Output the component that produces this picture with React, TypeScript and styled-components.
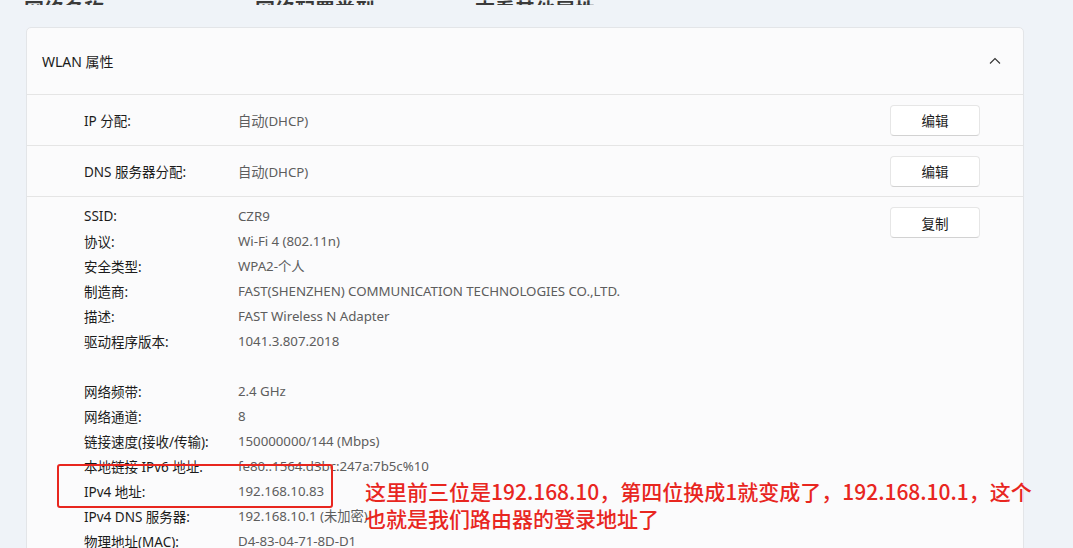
import React from 'react';
import styled, {createGlobalStyle} from 'styled-components';

const GlobalStyle = createGlobalStyle`
  html, body {
    margin: 0;
    padding: 0;
    background: #eff3f8;
    overflow: hidden;
  }
  body {
    font-family: "Noto Sans", "Noto Sans CJK SC", sans-serif;
    -webkit-font-smoothing: antialiased;
  }
`;

const Page = styled.div`
  position: relative;
  width: 1073px;
  height: 548px;
  overflow: hidden;
`;

const TopStrip = styled.div`
  height: 5px;
  overflow: hidden;
  display: flex;
  align-items: flex-end;
  padding-left: 24px;
`;
const TopTitle = styled.span<{ $w: number }>`
  width: ${p => p.$w}px;
  flex: none;
  font-size: 20px;
  line-height: 20px;
  font-weight: 600;
  color: #3a3a3a;
  white-space: nowrap;
  transform: translateY(16px);
`;

const Card = styled.div`
  margin: 22px 0 0 26px;
  width: 996px;
  background: #fbfbfc;
  border: 1px solid #e3e5e8;
  border-radius: 5px;
`;
const Header = styled.div`
  height: 66px;
  display: flex;
  align-items: center;
  justify-content: space-between;
  padding: 0 22px 0 15px;
  font-size: 14px;
  color: #1b1b1b;
  border-bottom: 1px solid #e5e5e5;
`;
const Row = styled.div`
  height: 50px;
  display: flex;
  align-items: center;
  padding: 0 43px 0 57px;
  border-bottom: 1px solid #e5e5e5;
`;
const Label = styled.div`
  width: 154px;
  flex: none;
  font-size: 13.5px;
  color: #1b1b1b;
  white-space: nowrap;
`;
const Value = styled.div`
  flex: 1;
  font-size: 13.3px;
  letter-spacing: -0.05px;
  color: #5d5d5d;
  white-space: nowrap;
`;
const Button = styled.div`
  width: 88px;
  height: 29px;
  flex: none;
  display: flex;
  align-items: center;
  justify-content: center;
  background: #ffffff;
  border: 1px solid #e6e6e6;
  border-bottom-color: #d2d2d2;
  border-radius: 4px;
  font-size: 13.5px;
  color: #1b1b1b;
`;
const Details = styled.div`
  display: flex;
  align-items: flex-start;
  padding: 6px 43px 20px 57px;
`;
const List = styled.div`
  flex: 1;
  display: flex;
  flex-direction: column;
`;
const DetailRow = styled.div`
  height: 25px;
  display: flex;
  align-items: center;
`;
const Gap = styled.div`
  height: 25px;
`;
const CopyButton = styled(Button)`
  margin-top: 4px;
`;

const RedBox = styled.div`
  position: absolute;
  left: 57px;
  top: 464px;
  width: 272px;
  height: 40px;
  border: 2px solid #e8261f;
  border-radius: 3px;
`;
const Note = styled.div`
  position: absolute;
  left: 365px;
  top: 478px;
  font-size: 21px;
  line-height: 27px;
  font-weight: 500;
  color: #e8261f;
  white-space: nowrap;
  font-family: "Noto Sans CJK SC", sans-serif;
`;

const Chevron = () => (
    <svg width="12" height="8" viewBox="0 0 12 8" fill="none">
        <path d="M1 6.5L6 1.5L11 6.5" stroke="#333" strokeWidth="1.1"/>
    </svg>
);

const details: (string[] | null)[] = [
    ['SSID:', 'CZR9'],
    ['协议:', 'Wi-Fi 4 (802.11n)'],
    ['安全类型:', 'WPA2-个人'],
    ['制造商:', 'FAST(SHENZHEN) COMMUNICATION TECHNOLOGIES CO.,LTD.'],
    ['描述:', 'FAST Wireless N Adapter'],
    ['驱动程序版本:', '1041.3.807.2018'],
    null,
    ['网络频带:', '2.4 GHz'],
    ['网络通道:', '8'],
    ['链接速度(接收/传输):', '150000000/144 (Mbps)'],
    ['本地链接 IPv6 地址:', 'fe80::1564:d3bc:247a:7b5c%10'],
    ['IPv4 地址:', '192.168.10.83'],
    ['IPv4 DNS 服务器:', '192.168.10.1 (未加密)'],
    ['物理地址(MAC):', 'D4-83-04-71-8D-D1'],
];

export default function App() {
    return (
        <Page>
            <GlobalStyle/>
            <TopStrip>
                <TopTitle $w={231}>网络名称</TopTitle>
                <TopTitle $w={220}>网络配置类型</TopTitle>
                <TopTitle $w={200}>查看其他属性</TopTitle>
            </TopStrip>

            <Card>
                <Header>
                    <span>WLAN 属性</span>
                    <Chevron/>
                </Header>
                <Row>
                    <Label>IP 分配:</Label>
                    <Value>自动(DHCP)</Value>
                    <Button>编辑</Button>
                </Row>
                <Row>
                    <Label>DNS 服务器分配:</Label>
                    <Value>自动(DHCP)</Value>
                    <Button>编辑</Button>
                </Row>
                <Details>
                    <List>
                        {details.map((d, i) => d ? (
                            <DetailRow key={i}>
                                <Label>{d[0]}</Label>
                                <Value>{d[1]}</Value>
                            </DetailRow>
                        ) : <Gap key={i}/>)}
                    </List>
                    <CopyButton>复制</CopyButton>
                </Details>
            </Card>

            <RedBox/>
            <Note>
                这里前三位是192.168.10，第四位换成1就变成了，192.168.10.1，这个<br/>
                也就是我们路由器的登录地址了
            </Note>
        </Page>
    );
}
